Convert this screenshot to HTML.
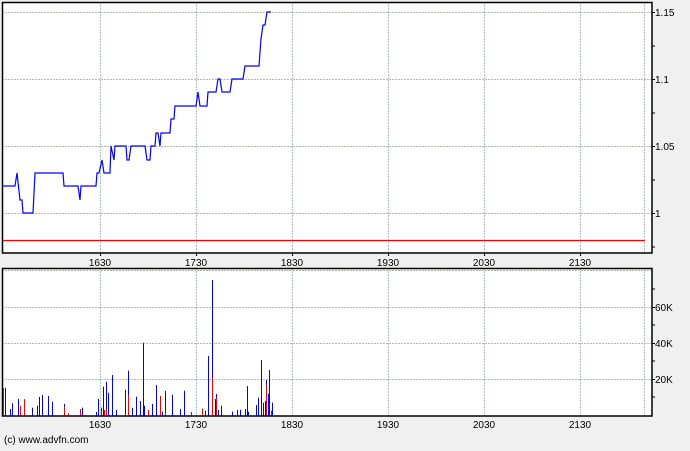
<!DOCTYPE html>
<html><head><style>
body{margin:0;background:#f0f0f0;width:690px;height:446px;overflow:hidden;font-family:"Liberation Sans",sans-serif}
svg text{font-family:"Liberation Sans",sans-serif;font-size:10px;fill:#000}
</style></head><body>
<svg id="s" width="690" height="446" xmlns="http://www.w3.org/2000/svg">
<rect x="2" y="2" width="650" height="251" fill="#fff"/>
<rect x="2" y="268" width="650" height="148" fill="#fff"/>
<g stroke="#a8c4c4" stroke-width="1" stroke-dasharray="2,1">
<line x1="100.5" y1="2" x2="100.5" y2="253"/><line x1="196.5" y1="2" x2="196.5" y2="253"/><line x1="292.5" y1="2" x2="292.5" y2="253"/><line x1="388.5" y1="2" x2="388.5" y2="253"/><line x1="484.5" y1="2" x2="484.5" y2="253"/><line x1="580.5" y1="2" x2="580.5" y2="253"/><line x1="644.5" y1="2" x2="644.5" y2="253"/>
<line x1="100.5" y1="268" x2="100.5" y2="416"/><line x1="196.5" y1="268" x2="196.5" y2="416"/><line x1="292.5" y1="268" x2="292.5" y2="416"/><line x1="388.5" y1="268" x2="388.5" y2="416"/><line x1="484.5" y1="268" x2="484.5" y2="416"/><line x1="580.5" y1="268" x2="580.5" y2="416"/><line x1="644.5" y1="268" x2="644.5" y2="416"/>
</g>
<g stroke="#b8b8b0" stroke-width="1" stroke-dasharray="2,1">
<line x1="2" y1="12.5" x2="652" y2="12.5"/><line x1="2" y1="79.5" x2="652" y2="79.5"/><line x1="2" y1="146.5" x2="652" y2="146.5"/><line x1="2" y1="213.5" x2="652" y2="213.5"/>
<line x1="2" y1="270.5" x2="652" y2="270.5"/><line x1="2" y1="307.5" x2="652" y2="307.5"/><line x1="2" y1="343.5" x2="652" y2="343.5"/><line x1="2" y1="379.5" x2="652" y2="379.5"/>
</g>
<line x1="2" y1="240.5" x2="645" y2="240.5" stroke="#f00" stroke-width="1.2"/>
<polyline fill="none" stroke="#0000ff" stroke-width="1.2" points="2,186 15,186 17,173 20,200 22,200 23,213 33,213 35,173 63,173 64,186 78,186 80,200 81,186 96,186 97,173 99,173 102,160 104,173 110,173 111,146 114,160 115,146 126,146 127,160 129,160 131,146 145,146 147,160 150,160 151,146 155,146 156,133 158,133 160,146 161,133 170,133 171,119 174,119 175,106 196,106 198,92 200,106 207,106 208,92 216,92 218,79 220,79 222,92 230,92 232,79 243,79 245,66 259,66 261,39 263,25 265,25 267,12 271,12"/>
<g id="bars"></g>
<rect x="2.5" y="2.5" width="649.5" height="250.5" fill="none" stroke="#000" stroke-width="1.5"/>
<rect x="2.5" y="268.5" width="649.5" height="147.5" fill="none" stroke="#000" stroke-width="1.5"/>
<g stroke="#000">
<line x1="652" y1="12.5" x2="655" y2="12.5"/><line x1="652" y1="46" x2="655" y2="46"/><line x1="652" y1="79.5" x2="655" y2="79.5"/><line x1="652" y1="113" x2="655" y2="113"/><line x1="652" y1="146.5" x2="655" y2="146.5"/><line x1="652" y1="180" x2="655" y2="180"/><line x1="652" y1="213.5" x2="655" y2="213.5"/><line x1="652" y1="247" x2="655" y2="247"/>
<line x1="652" y1="289" x2="655" y2="289"/><line x1="652" y1="307.5" x2="655" y2="307.5"/><line x1="652" y1="325" x2="655" y2="325"/><line x1="652" y1="343.5" x2="655" y2="343.5"/><line x1="652" y1="361" x2="655" y2="361"/><line x1="652" y1="379.5" x2="655" y2="379.5"/><line x1="652" y1="397" x2="655" y2="397"/>
<line x1="100.5" y1="253" x2="100.5" y2="256"/><line x1="196.5" y1="253" x2="196.5" y2="256"/><line x1="292.5" y1="253" x2="292.5" y2="256"/><line x1="388.5" y1="253" x2="388.5" y2="256"/><line x1="484.5" y1="253" x2="484.5" y2="256"/><line x1="580.5" y1="253" x2="580.5" y2="256"/>
</g>
<text x="655" y="16">1.15</text><text x="655" y="83">1.1</text><text x="655" y="150">1.05</text><text x="655" y="217">1</text>
<text x="655" y="311">60K</text><text x="655" y="347">40K</text><text x="655" y="383">20K</text>
<g text-anchor="middle">
<text x="100" y="266">1630</text><text x="196" y="266">1730</text><text x="292" y="266">1830</text><text x="388" y="266">1930</text><text x="484" y="266">2030</text><text x="580" y="266">2130</text>
<text x="100" y="428">1630</text><text x="196" y="428">1730</text><text x="292" y="428">1830</text><text x="388" y="428">1930</text><text x="484" y="428">2030</text><text x="580" y="428">2130</text>
</g>
<text x="4" y="443">(c) www.advfn.com</text>
</svg>
<script>
var b=[[16,383],[31,447],[37,430],[55,417],[95,443],[110,437],[118,411],[127,405],[145,408],[157,425],[193,432],[247,443],[287,456],[295,417],[302,443],[310,380],[319,365],[325,398],[337,345],[349,450],[376,389],[385,332],[397,443],[409,410],[421,423],[430,248],[432,437],[457,432],[469,375],[487,455],[496,393],[517,404],[541,447],[553,392],[605,455],[614,452],[625,288],[637,60],[646,417],[649,402],[655,450],[664,437],[697,455],[712,450],[721,449],[736,447],[742,378],[745,455],[769,435],[775,413],[784,300],[790,428],[794,423],[799,360],[805,401],[808,330],[817,428]];
var r=[[61,437],[73,417],[193,440],[205,460],[241,447],[304,455],[313,450],[319,448],[385,405],[445,450],[481,408],[496,455],[574,456],[607,446],[637,355],[647,412],[799,375],[814,452]];
var g=document.getElementById('bars'),h='';
function add(a,c){a.forEach(function(p){var x=Math.round(p[0]/3),t=260+p[1]/3;h+='<rect x="'+x+'" y="'+t.toFixed(1)+'" width="1" height="'+(415.5-t).toFixed(1)+'" fill="'+c+'"/>';});}
add(b,'#0000ff');add(r,'#ff0000');
h+='<rect x="3" y="388" width="1" height="27" fill="#00a000"/>';
g.innerHTML=h;
</script>
</body></html>
